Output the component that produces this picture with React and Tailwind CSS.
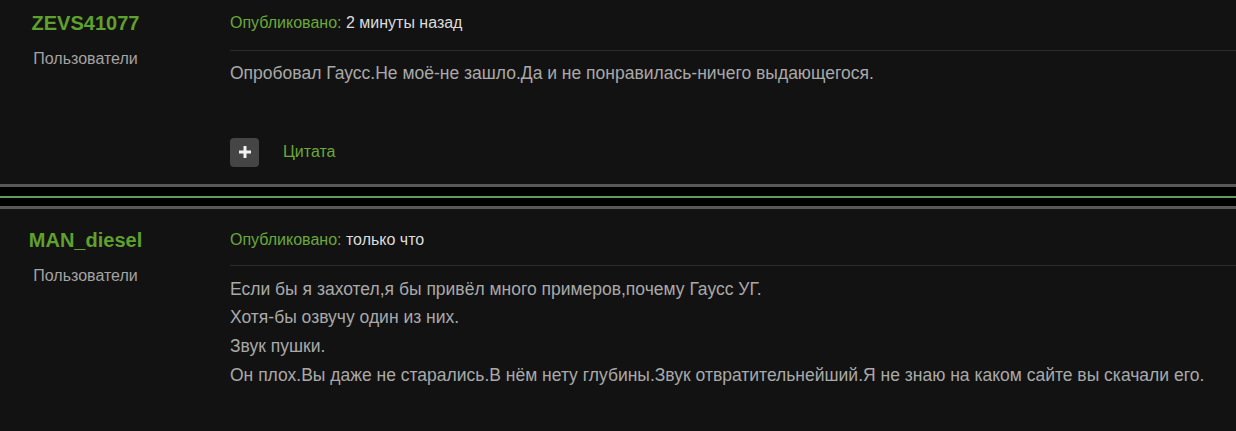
import React from 'react';

const posts = [
    {
        author: 'ZEVS41077',
        time: '2 минуты назад',
        lines: ['Опробовал Гаусс.Не моё-не зашло.Да и не понравилась-ничего выдающегося.'],
        quote: true,
        top: 'pt-[11px]',
        metaPad: 'pb-[17px]',
        bodyPad: 'pt-[8px]',
    },
    {
        author: 'MAN_diesel',
        time: 'только что',
        lines: [
            'Если бы я захотел,я бы привёл много примеров,почему Гаусс УГ.',
            'Хотя-бы озвучу один из них.',
            'Звук пушки.',
            'Он плох.Вы даже не старались.В нём нету глубины.Звук отвратительнейший.Я не знаю на каком сайте вы скачали его.',
        ],
        quote: false,
        top: 'pt-[19px]',
        metaPad: 'pb-[15px]',
        bodyPad: 'pt-[9px]',
    },
];

const Post = ({ post }) => (
    <div className={`flex ${post.top}`}>
        <div className="w-[171px] shrink-0 text-center">
            <div className="text-[20px] leading-6 font-bold text-[#5fa12d]">{post.author}</div>
            <div className="mt-[14px] text-[16px] leading-5 text-[#a3a3a3]">Пользователи</div>
        </div>

        <div className="ml-[59px] flex-1 pt-[2px]">
            <div className={`${post.metaPad} border-b border-[#2c2c2c] text-[16px] leading-5`}>
                <span className="text-[#6aa83a]">Опубликовано: </span>
                <span className="text-[#dcdcdc]">{post.time}</span>
            </div>
            <div className={`${post.bodyPad} text-[17.5px] leading-[28.7px] text-[#a9a9a9]`}>
                {post.lines.map((line, i) => (
                    <div key={i}>{line}</div>
                ))}
            </div>

            {post.quote && (
                <div className="mt-[50px] pb-[17px] flex items-center gap-6">
                    <button className="w-[29px] h-[29px] rounded-[4px] bg-[#454545] flex items-center justify-center">
                        <svg width="12" height="12" viewBox="0 0 12 12">
                            <rect x="4.5" y="0" width="3" height="12" fill="#f2f2f2" />
                            <rect x="0" y="4.5" width="12" height="3" fill="#f2f2f2" />
                        </svg>
                    </button>
                    <span className="text-[16px] text-[#6aa83a]">Цитата</span>
                </div>
            )}
        </div>
    </div>
);

export default function App() {
    return (
        <div className="w-[1236px] h-[431px] overflow-hidden bg-[#121212] font-['Liberation_Sans',Arial,sans-serif]">
            <Post post={posts[0]} />

            <div className="bg-black">
                <div className="h-[3px] bg-[#585858]" />
                <div className="h-[9px]" />
                <div className="h-[2px] bg-[#5f9a5f]" />
                <div className="h-[8px]" />
                <div className="h-[3px] bg-[#585858]" />
            </div>

            <Post post={posts[1]} />
        </div>
    );
}
